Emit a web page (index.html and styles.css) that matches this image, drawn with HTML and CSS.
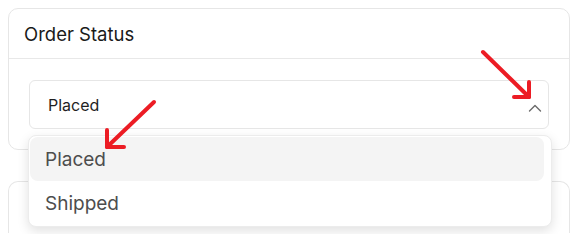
FILE: index.html
```html
<!DOCTYPE html>
<html lang="en">
<head>
    <meta charset="UTF-8">
    <meta name="viewport" content="width=device-width, initial-scale=1.0">
    <title>Order Status</title>
    <link rel="stylesheet" href="styles.css">
</head>
<body>
    <!-- Stato ordine -->
    <div class="card">
        <div class="card-header">Order Status</div>
        <div class="card-body">
            <div class="select">
                <span>Placed</span>
                <svg class="chevron" width="14" height="8" viewBox="0 0 14 8">
                    <path d="M1.5 7 L7 1.5 L12.5 7" fill="none" stroke="#6b6b6b" stroke-width="1.4" stroke-linecap="round" stroke-linejoin="round"/>
                </svg>
            </div>
            <ul class="dropdown">
                <li class="active">Placed</li>
                <li>Shipped</li>
            </ul>
        </div>
    </div>

    <div class="card card-next"></div>

    <!-- Frecce di annotazione -->
    <svg class="annotations" width="580" height="234" viewBox="0 0 580 234">
        <g fill="none" stroke="#ec1c24" stroke-width="4" stroke-linecap="round" stroke-linejoin="round">
            <path d="M483 52 L529 97"/>
            <path d="M529 82 L529 97 L514 97"/>
            <path d="M154 102 L107 147"/>
            <path d="M107 130 L107 147 L124 147"/>
        </g>
    </svg>
</body>
</html>
```

FILE: styles.css
```css
body {
    font-family: Inter, "Noto Sans", sans-serif;
    margin: 0;
    padding: 8px 10px 0 8px;
    background-color: #fff;
    overflow: hidden;
    height: 234px;
    box-sizing: border-box;
}

.card {
    border: 1px solid #e6e6e6;
    border-radius: 10px;
    background-color: #fff;
}

.card-header {
    height: 49px;
    border-bottom: 1px solid #e8e8e8;
    padding: 0 15px;
    display: flex;
    align-items: center;
    font-size: 18.5px;
    color: #1a1a1a;
}

.card-body {
    position: relative;
    padding: 21px 20px 20px;
}

.select {
    height: 47px;
    border: 1px solid #e6e6e6;
    border-radius: 6px;
    display: flex;
    align-items: center;
    justify-content: space-between;
    padding: 0 6px 0 18px;
    font-size: 16px;
    color: #1f1f1f;
}

.chevron {
    margin-top: 6px;
}

.dropdown {
    position: absolute;
    left: 19px;
    top: 76px;
    width: 514px;
    margin: 0;
    padding: 1px 7px 1px 1px;
    list-style: none;
    background-color: #fff;
    border: 1px solid #ececec;
    border-radius: 8px;
    box-shadow: 0 4px 12px rgba(0, 0, 0, 0.12);
    z-index: 2;
}

.dropdown li {
    height: 44px;
    display: flex;
    align-items: center;
    padding-left: 15px;
    font-size: 19px;
    color: #4d4d4d;
    border-radius: 8px;
}

.dropdown li.active {
    background-color: #f4f4f4;
}

.card-next {
    margin-top: 31px;
    height: 51px;
    border-bottom: none;
    border-radius: 10px 10px 0 0;
}

.annotations {
    position: absolute;
    left: 0;
    top: 0;
    z-index: 3;
    pointer-events: none;
}
```
